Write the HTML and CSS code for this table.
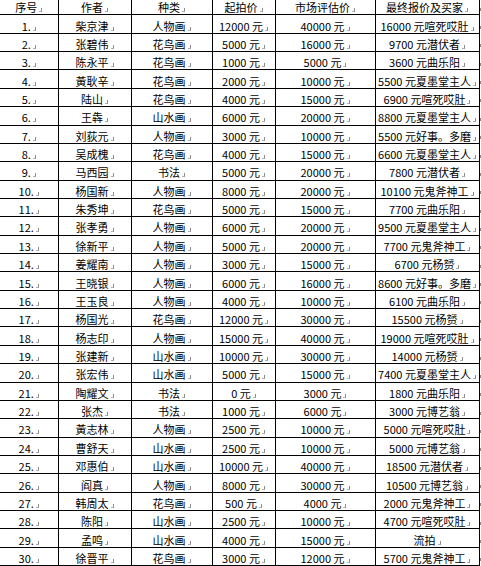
FILE: index.html
```html
<!DOCTYPE html>
<html lang="zh">
<head>
<meta charset="utf-8">
<title>拍卖结果</title>
<link rel="stylesheet" href="styles.css">
</head>
<body>
<table class="sheet">
<colgroup>
<col class="c-no"><col class="c-author"><col class="c-kind"><col class="c-start"><col class="c-market"><col class="c-final"><col class="c-end">
</colgroup>
<tbody>
<tr><td>序号<i class="pm"></i></td><td>作者<i class="pm"></i></td><td>种类<i class="pm"></i></td><td>起拍价<i class="pm"></i></td><td>市场评估价<i class="pm"></i></td><td>最终报价及买家<i class="pm"></i></td><td class="end"><i class="em"></i></td></tr>
<tr><td>1.<i class="pm"></i></td><td>柴京津<i class="pm"></i></td><td>人物画<i class="pm"></i></td><td>12000 元<i class="pm"></i></td><td>40000 元<i class="pm"></i></td><td>16000 元喧死哎肚<i class="pm"></i></td><td class="end"><i class="em"></i></td></tr>
<tr><td>2.<i class="pm"></i></td><td>张碧伟<i class="pm"></i></td><td>花鸟画<i class="pm"></i></td><td>5000 元<i class="pm"></i></td><td>16000 元<i class="pm"></i></td><td>9700 元潜伏者<i class="pm"></i></td><td class="end"><i class="em"></i></td></tr>
<tr><td>3.<i class="pm"></i></td><td>陈永平<i class="pm"></i></td><td>花鸟画<i class="pm"></i></td><td>1000 元<i class="pm"></i></td><td>5000 元<i class="pm"></i></td><td>3600 元曲乐阳<i class="pm"></i></td><td class="end"><i class="em"></i></td></tr>
<tr><td>4.<i class="pm"></i></td><td>黃耿辛<i class="pm"></i></td><td>花鸟画<i class="pm"></i></td><td>2000 元<i class="pm"></i></td><td>10000 元<i class="pm"></i></td><td>5500 元夏墨堂主人<i class="pm"></i></td><td class="end"><i class="em"></i></td></tr>
<tr><td>5.<i class="pm"></i></td><td>陆山<i class="pm"></i></td><td>花鸟画<i class="pm"></i></td><td>4000 元<i class="pm"></i></td><td>15000 元<i class="pm"></i></td><td>6900 元喧死哎肚<i class="pm"></i></td><td class="end"><i class="em"></i></td></tr>
<tr><td>6.<i class="pm"></i></td><td>王犇<i class="pm"></i></td><td>山水画<i class="pm"></i></td><td>6000 元<i class="pm"></i></td><td>20000 元<i class="pm"></i></td><td>8800 元夏墨堂主人<i class="pm"></i></td><td class="end"><i class="em"></i></td></tr>
<tr><td>7.<i class="pm"></i></td><td>刘荻元<i class="pm"></i></td><td>人物画<i class="pm"></i></td><td>3000 元<i class="pm"></i></td><td>10000 元<i class="pm"></i></td><td>5500 元好事。多磨<i class="pm"></i></td><td class="end"><i class="em"></i></td></tr>
<tr><td>8.<i class="pm"></i></td><td>吴成槐<i class="pm"></i></td><td>花鸟画<i class="pm"></i></td><td>4000 元<i class="pm"></i></td><td>15000 元<i class="pm"></i></td><td>6600 元夏墨堂主人<i class="pm"></i></td><td class="end"><i class="em"></i></td></tr>
<tr><td>9.<i class="pm"></i></td><td>马西园<i class="pm"></i></td><td>书法<i class="pm"></i></td><td>5000 元<i class="pm"></i></td><td>20000 元<i class="pm"></i></td><td>7800 元潜伏者<i class="pm"></i></td><td class="end"><i class="em"></i></td></tr>
<tr><td>10.<i class="pm"></i></td><td>杨国新<i class="pm"></i></td><td>人物画<i class="pm"></i></td><td>8000 元<i class="pm"></i></td><td>20000 元<i class="pm"></i></td><td>10100 元鬼斧神工<i class="pm"></i></td><td class="end"><i class="em"></i></td></tr>
<tr><td>11.<i class="pm"></i></td><td>朱秀坤<i class="pm"></i></td><td>花鸟画<i class="pm"></i></td><td>5000 元<i class="pm"></i></td><td>15000 元<i class="pm"></i></td><td>7700 元曲乐阳<i class="pm"></i></td><td class="end"><i class="em"></i></td></tr>
<tr><td>12.<i class="pm"></i></td><td>张孝勇<i class="pm"></i></td><td>人物画<i class="pm"></i></td><td>6000 元<i class="pm"></i></td><td>20000 元<i class="pm"></i></td><td>9500 元夏墨堂主人<i class="pm"></i></td><td class="end"><i class="em"></i></td></tr>
<tr><td>13.<i class="pm"></i></td><td>徐新平<i class="pm"></i></td><td>人物画<i class="pm"></i></td><td>5000 元<i class="pm"></i></td><td>20000 元<i class="pm"></i></td><td>7700 元鬼斧神工<i class="pm"></i></td><td class="end"><i class="em"></i></td></tr>
<tr><td>14.<i class="pm"></i></td><td>姜耀南<i class="pm"></i></td><td>人物画<i class="pm"></i></td><td>3000 元<i class="pm"></i></td><td>15000 元<i class="pm"></i></td><td>6700 元杨赟<i class="pm"></i></td><td class="end"><i class="em"></i></td></tr>
<tr><td>15.<i class="pm"></i></td><td>王晓银<i class="pm"></i></td><td>人物画<i class="pm"></i></td><td>6000 元<i class="pm"></i></td><td>16000 元<i class="pm"></i></td><td>8600 元好事。多磨<i class="pm"></i></td><td class="end"><i class="em"></i></td></tr>
<tr><td>16.<i class="pm"></i></td><td>王玉良<i class="pm"></i></td><td>人物画<i class="pm"></i></td><td>4000 元<i class="pm"></i></td><td>10000 元<i class="pm"></i></td><td>6100 元曲乐阳<i class="pm"></i></td><td class="end"><i class="em"></i></td></tr>
<tr><td>17.<i class="pm"></i></td><td>杨国光<i class="pm"></i></td><td>花鸟画<i class="pm"></i></td><td>12000 元<i class="pm"></i></td><td>30000 元<i class="pm"></i></td><td>15500 元杨赟<i class="pm"></i></td><td class="end"><i class="em"></i></td></tr>
<tr><td>18.<i class="pm"></i></td><td>杨志印<i class="pm"></i></td><td>人物画<i class="pm"></i></td><td>15000 元<i class="pm"></i></td><td>40000 元<i class="pm"></i></td><td>19000 元喧死哎肚<i class="pm"></i></td><td class="end"><i class="em"></i></td></tr>
<tr><td>19.<i class="pm"></i></td><td>张建新<i class="pm"></i></td><td>山水画<i class="pm"></i></td><td>10000 元<i class="pm"></i></td><td>30000 元<i class="pm"></i></td><td>14000 元杨赟<i class="pm"></i></td><td class="end"><i class="em"></i></td></tr>
<tr><td>20.<i class="pm"></i></td><td>张宏伟<i class="pm"></i></td><td>山水画<i class="pm"></i></td><td>5000 元<i class="pm"></i></td><td>15000 元<i class="pm"></i></td><td>7400 元夏墨堂主人<i class="pm"></i></td><td class="end"><i class="em"></i></td></tr>
<tr><td>21.<i class="pm"></i></td><td>陶耀文<i class="pm"></i></td><td>书法<i class="pm"></i></td><td>0 元<i class="pm"></i></td><td>3000 元<i class="pm"></i></td><td>1800 元曲乐阳<i class="pm"></i></td><td class="end"><i class="em"></i></td></tr>
<tr><td>22.<i class="pm"></i></td><td>张杰<i class="pm"></i></td><td>书法<i class="pm"></i></td><td>1000 元<i class="pm"></i></td><td>6000 元<i class="pm"></i></td><td>3000 元博艺翁<i class="pm"></i></td><td class="end"><i class="em"></i></td></tr>
<tr><td>23.<i class="pm"></i></td><td>黃志林<i class="pm"></i></td><td>人物画<i class="pm"></i></td><td>2500 元<i class="pm"></i></td><td>10000 元<i class="pm"></i></td><td>5000 元喧死哎肚<i class="pm"></i></td><td class="end"><i class="em"></i></td></tr>
<tr><td>24.<i class="pm"></i></td><td>曹舒天<i class="pm"></i></td><td>山水画<i class="pm"></i></td><td>2500 元<i class="pm"></i></td><td>10000 元<i class="pm"></i></td><td>5000 元博艺翁<i class="pm"></i></td><td class="end"><i class="em"></i></td></tr>
<tr><td>25.<i class="pm"></i></td><td>邓惠伯<i class="pm"></i></td><td>山水画<i class="pm"></i></td><td>10000 元<i class="pm"></i></td><td>40000 元<i class="pm"></i></td><td>18500 元潜伏者<i class="pm"></i></td><td class="end"><i class="em"></i></td></tr>
<tr><td>26.<i class="pm"></i></td><td>阎真<i class="pm"></i></td><td>人物画<i class="pm"></i></td><td>8000 元<i class="pm"></i></td><td>30000 元<i class="pm"></i></td><td>10500 元博艺翁<i class="pm"></i></td><td class="end"><i class="em"></i></td></tr>
<tr><td>27.<i class="pm"></i></td><td>韩周太<i class="pm"></i></td><td>花鸟画<i class="pm"></i></td><td>500 元<i class="pm"></i></td><td>4000 元<i class="pm"></i></td><td>2000 元鬼斧神工<i class="pm"></i></td><td class="end"><i class="em"></i></td></tr>
<tr><td>28.<i class="pm"></i></td><td>陈阳<i class="pm"></i></td><td>山水画<i class="pm"></i></td><td>2500 元<i class="pm"></i></td><td>10000 元<i class="pm"></i></td><td>4700 元喧死哎肚<i class="pm"></i></td><td class="end"><i class="em"></i></td></tr>
<tr><td>29.<i class="pm"></i></td><td>孟鸣<i class="pm"></i></td><td>山水画<i class="pm"></i></td><td>4000 元<i class="pm"></i></td><td>15000 元<i class="pm"></i></td><td>流拍<i class="pm"></i></td><td class="end"><i class="em"></i></td></tr>
<tr><td>30.<i class="pm"></i></td><td>徐晋平<i class="pm"></i></td><td>花鸟画<i class="pm"></i></td><td>3000 元<i class="pm"></i></td><td>12000 元<i class="pm"></i></td><td>5700 元鬼斧神工<i class="pm"></i></td><td class="end"><i class="em"></i></td></tr>
</tbody>
</table>
</body>
</html>
```

FILE: styles.css
```css
html, body {
  margin: 0;
  padding: 0;
  background: #ffffff;
  overflow: hidden;
}

.sheet {
  margin-top: -4px;
  width: 481px;
  table-layout: fixed;
  border-collapse: collapse;
  font-family: "Noto Sans CJK SC", "Noto Sans", sans-serif;
  font-size: 11px;
  color: #000000;
}

.c-no { width: 58px; }
.c-author { width: 73px; }
.c-kind { width: 81px; }
.c-start { width: 63px; }
.c-market { width: 100px; }
.c-final { width: 104px; }
.c-end { width: 2px; }

.sheet tr {
  height: 18.37px;
}

.sheet td {
  border: 1px solid #000000;
  padding: 3px 0 0 0;
  text-align: center;
  vertical-align: middle;
  line-height: 14px;
  white-space: nowrap;
  overflow: hidden;
}

.sheet td:first-child {
  border-left: none;
}

.sheet td.end {
  border: none;
  text-align: left;
}

.pm {
  display: inline-block;
  width: 2px;
  height: 3px;
  margin-left: 2px;
  border-right: 1px solid #8c8c8c;
  border-bottom: 1px solid #b0b0b0;
  vertical-align: baseline;
}

.em {
  display: inline-block;
  width: 1px;
  height: 3px;
  background: #8c8c8c;
  vertical-align: middle;
}
```
